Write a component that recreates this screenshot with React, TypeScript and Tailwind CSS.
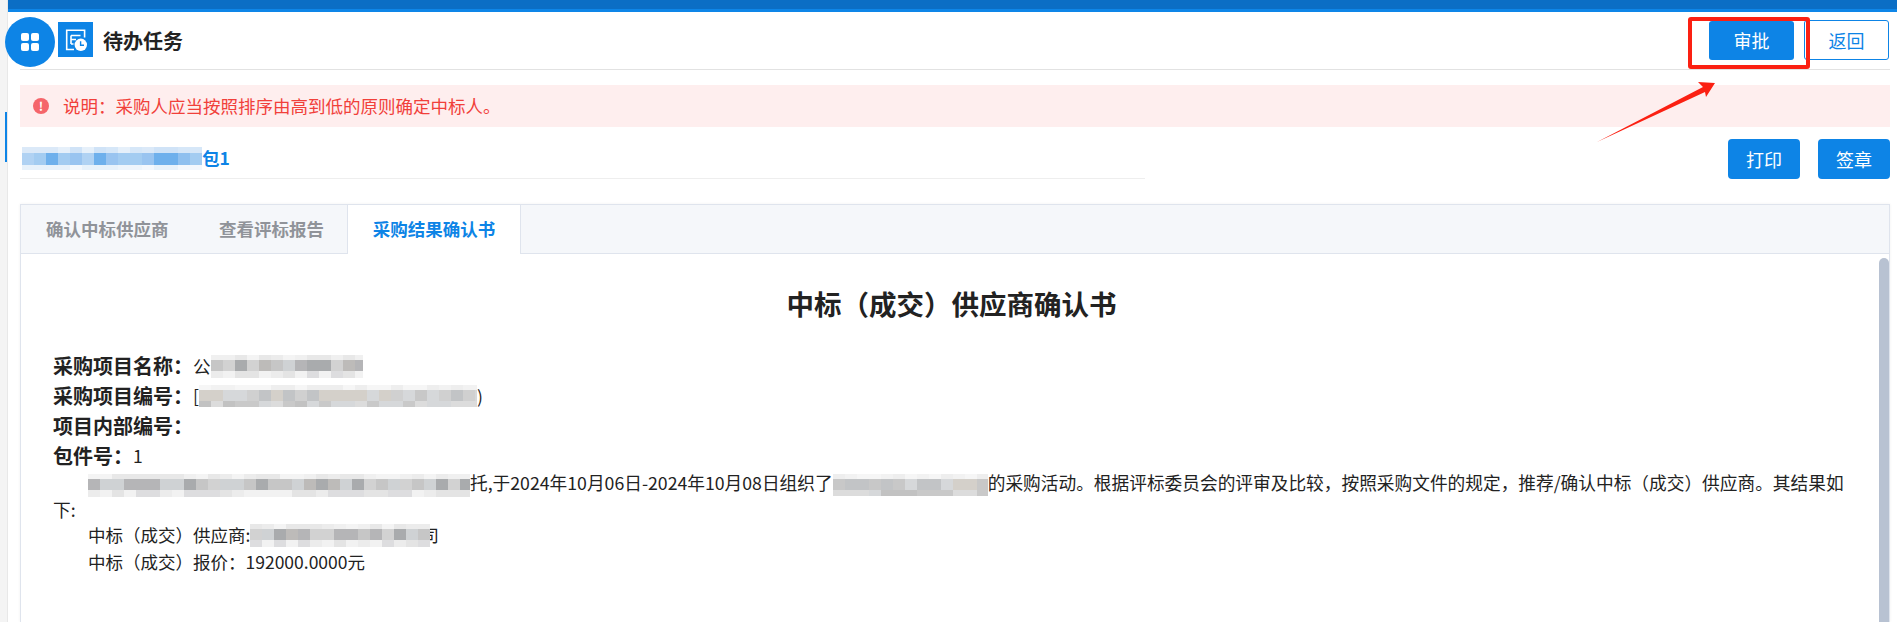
import React from "react";

const FONT = '"Noto Sans CJK SC", "Noto Sans", sans-serif';

type Row = [number, string[]];

function hash(i: number, seed: number) {
  const x = Math.sin(i * 12.9898 + seed * 78.233) * 43758.5453;
  return x - Math.floor(x);
}

function Mosaic({
  width,
  rows,
  seed,
  cell = 12,
}: {
  width: number;
  rows: Row[];
  seed: number;
  cell?: number;
}) {
  const n = Math.ceil(width / cell);
  const h = rows.reduce((a, r) => a + r[0], 0);
  return (
    <span
      className="relative z-10 inline-flex flex-col align-middle overflow-hidden [text-indent:0]"
      style={{ width, height: h, marginTop: -h, marginBottom: -h }}
    >
      {rows.map((r, ri) => (
        <span key={ri} className="flex shrink-0" style={{ height: r[0] }}>
          {Array.from({ length: n }).map((_, i) => (
            <span
              key={i}
              className="shrink-0"
              style={{
                width: cell,
                height: r[0],
                background: r[1][Math.floor(hash(i + ri * 31, seed) * r[1].length)],
              }}
            />
          ))}
        </span>
      ))}
    </span>
  );
}

const greyRows: Row[] = [
  [5, ["#f0f0f0", "#ececec", "#f4f4f4", "#e8e8e8"]],
  [11, ["#b5b5b7", "#c6c6c6", "#a9abad", "#d2d2d2", "#bdbbb9", "#cfd2d4"]],
  [7, ["#e4e4e4", "#ececec", "#dddddf", "#f2f2f2"]],
];
const lightRows: Row[] = [
  [5, ["#f2f2f2", "#eeeeee", "#f6f6f6"]],
  [11, ["#c8c8c8", "#d0d0d0", "#c2c4c6", "#d6d8da", "#d4d0ca"]],
  [6, ["#c9c9c9", "#d6d8da", "#c2c2c2", "#dcdcdc"]],
];
const blueRows: Row[] = [
  [6, ["#d6e7f8", "#dbe9f8", "#d0e3f7", "#e6f0fa"]],
  [12, ["#6eb0ec", "#8fc0ef", "#a3ccf1", "#7db6ed", "#99c4f0", "#b0d2f3"]],
  [5, ["#eef5fc", "#f4f8fd", "#e8f2fb"]],
];

function Label({ children }: { children: React.ReactNode }) {
  return <span className="text-[20px] font-bold">{children}</span>;
}

export default function App() {
  return (
    <div
      className="relative flex h-[622px] w-[1897px] overflow-hidden bg-white text-[#222]"
      style={{ fontFamily: FONT }}
    >
      {/* left rail */}
      <div className="flex h-full w-[8px] shrink-0 border-r border-[#e8e8e8] bg-[#f4f4f4]">
        <div className="ml-[5px] mt-[112px] h-[50px] w-[2px] bg-[#0d84e6]" />
      </div>

      <div className="flex min-w-0 flex-1 flex-col">
        {/* top bar */}
        <div className="h-[12px] shrink-0 border-b-[3px] border-[#0e86e8] bg-[#0b6ec5]" />

        <div className="flex flex-1 flex-col pl-[12px] pr-[7px]">
          {/* header */}
          <div className="flex h-[58px] shrink-0 items-start border-b border-[#e2e2e2]">
            <div className="-ml-[15px] mt-[5px] flex h-[50px] w-[50px] shrink-0 items-center justify-center rounded-full bg-[#0d84e6]">
              <div className="grid grid-cols-2 gap-[1.5px]">
                <span className="h-[8px] w-[8px] rounded-[2px] bg-white" />
                <span className="h-[8px] w-[8px] rounded-[2px] bg-white" />
                <span className="h-[8px] w-[8px] rounded-[2px] bg-white" />
                <span className="h-[8px] w-[8px] rounded-[2px] bg-white" />
              </div>
            </div>
            <div className="ml-[3px] mt-[10px] flex h-[35px] w-[35px] shrink-0 items-center justify-center bg-[#0d84e6]">
              <svg width="24" height="24" viewBox="0 0 24 24" fill="none">
                <path d="M10 21.5H2.7V2.2H20.6V9.5" stroke="#fff" strokeWidth="1.6" />
                <path d="M7 7.5H16.5M7 7.5V16M7 11.5H12M7 16H9.5" stroke="#fff" strokeWidth="1.6" />
                <circle cx="16.8" cy="16.8" r="6.2" fill="#fff" />
                <path d="M16.6 13.2V17.2H20" stroke="#0d84e6" strokeWidth="1.4" />
              </svg>
            </div>
            <div className="ml-[10px] mt-[13px] text-[20px] font-bold leading-[32px]">待办任务</div>
            <div className="ml-auto mr-[1px] mt-[8px] flex items-start">
              <button className="mt-[1px] h-[39px] w-[85px] rounded-[3px] bg-[#0d84e6] text-[18px] text-white">
                审批
              </button>
              <button className="ml-[10px] h-[40px] w-[85px] rounded-[3px] border border-[#0d84e6] text-[18px] text-[#0d84e6]">
                返回
              </button>
            </div>
          </div>

          {/* alert */}
          <div className="mt-[15px] flex h-[42px] shrink-0 items-center bg-[#feeeee] pl-[13px] text-[17.5px] text-[#f1403a]">
            <span className="flex h-[16px] w-[16px] shrink-0 items-center justify-center rounded-full bg-[#f5656a] text-[12px] font-bold leading-none text-white">
              !
            </span>
            <span className="ml-[14px]">说明：采购人应当按照排序由高到低的原则确定中标人。</span>
          </div>

          {/* sub header */}
          <div className="mt-[12px] flex h-[40px] shrink-0 items-start justify-between">
            <div className="-mb-[1px] h-[40px] w-[1125px] border-b border-[#eeeeee]">
              <div className="flex h-[38px] items-center whitespace-nowrap pl-[2px] text-[17.5px] font-bold text-[#0d84e6]">
                <Mosaic width={180} rows={blueRows} seed={3} />
                <span>包1</span>
              </div>
            </div>
            <div className="flex gap-[18px]">
              <button className="h-[40px] w-[72px] rounded-[4px] bg-[#0d84e6] text-[18px] text-white">打印</button>
              <button className="h-[40px] w-[72px] rounded-[4px] bg-[#0d84e6] text-[18px] text-white">签章</button>
            </div>
          </div>

          {/* card */}
          <div className="relative mt-[25px] flex min-h-0 flex-1 flex-col border border-b-0 border-[#dfe4ed] shadow-[0_0_3px_rgba(0,0,0,0.06)]">
            <div className="flex h-[49px] shrink-0 border-b border-[#dfe4ed] bg-[#f5f7fa] text-[17.5px] font-bold">
              <div className="flex h-[48px] w-[173px] items-center pl-[25px] text-[#909399]">确认中标供应商</div>
              <div className="flex h-[48px] w-[153px] items-center pl-[25px] text-[#909399]">查看评标报告</div>
              <div className="flex h-[49px] w-[174px] items-center justify-center border-x border-[#dfe4ed] bg-white text-[#0d84e6]">
                采购结果确认书
              </div>
            </div>

            <div className="relative min-h-0 flex-1 overflow-hidden pl-[32px] pr-[39px]">
              <h1 className="mt-[30px] text-center text-[27.5px] font-bold leading-[38px]">中标（成交）供应商确认书</h1>
              <div className="mt-[29px] whitespace-nowrap text-[17.5px] leading-[30px]">
                <div className="flex h-[30px] items-center">
                  <Label>采购项目名称：</Label>
                  <span>公</span>
                  <Mosaic width={152} rows={greyRows} seed={7} />
                </div>
                <div className="flex h-[30px] items-center">
                  <Label>采购项目编号：</Label>
                  <span>[</span>
                  <Mosaic width={278} rows={lightRows} seed={11} />
                  <span>)</span>
                </div>
                <div className="flex h-[30px] items-center">
                  <Label>项目内部编号：</Label>
                </div>
                <div className="flex h-[30px] items-center">
                  <Label>包件号：</Label>
                  <span>1</span>
                </div>
              </div>
              <p className="mt-[-2px] text-[17.7px] leading-[26.5px] [text-indent:35px]">
                <Mosaic width={382} rows={greyRows} seed={17} />
                托,于2024年10月06日-2024年10月08日组织了
                <Mosaic width={155} rows={lightRows} seed={23} />
                的采购活动。根据评标委员会的评审及比较，按照采购文件的规定，推荐/确认中标（成交）供应商。其结果如
                <br />
                <span className="inline-block [text-indent:0]">下:</span>
              </p>
              <div className="pl-[35px] text-[17.5px] leading-[26.5px]">
                <div className="flex items-center whitespace-nowrap">
                  <span>中标（成交）供应商:</span>
                  <Mosaic width={180} rows={greyRows} seed={29} />
                  <span className="-ml-[9px]">司</span>
                </div>
                <div className="whitespace-nowrap">中标（成交）报价：192000.0000元</div>
              </div>
              {/* scrollbar thumb */}
              <div className="absolute right-0 top-[4px] z-20 h-[400px] w-[10px] rounded-t-[5px] bg-[#b8c2d2]" />
            </div>
          </div>
        </div>
      </div>

      {/* annotation: red box and arrow */}
      <div className="absolute left-[1688px] top-[17px] h-[52px] w-[122px] rounded-[3px] border-[4px] border-[#fb2012]" />
      <svg className="absolute left-[1590px] top-[75px]" width="130" height="75" viewBox="0 0 130 75">
        <path d="M7 67 L113 12 L108 7 L125 8 L116 22 L115 17 Z" fill="#fb2012" />
      </svg>
    </div>
  );
}
